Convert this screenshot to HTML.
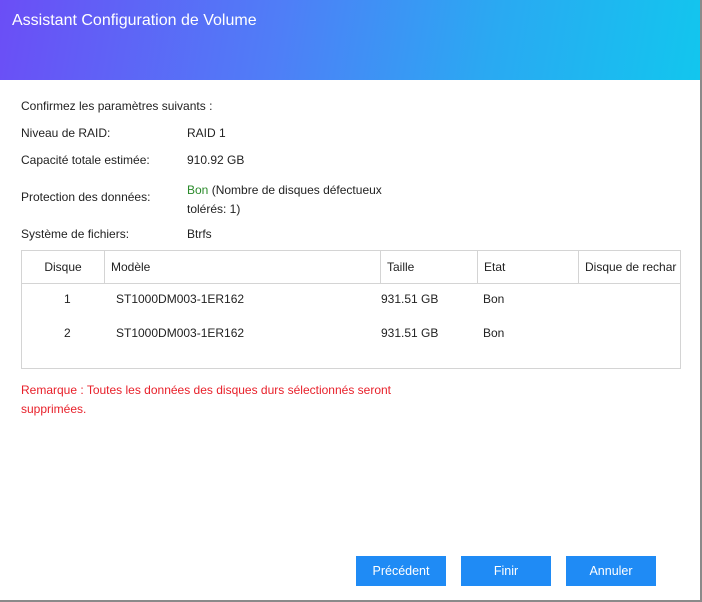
<!DOCTYPE html>
<html><head><meta charset="utf-8"><style>
body{margin:0;width:702px;height:602px;background:#fff;font-family:"Liberation Sans",sans-serif;font-size:12px;color:#222;position:relative;overflow:hidden}
.win{position:absolute;left:0;top:0;width:700px;height:600px;border-right:2px solid #8a8a8a;border-bottom:2px solid #8a8a8a;background:#fff}
.hdr{position:absolute;left:0;top:0;width:700px;height:80px;background:linear-gradient(100deg,#6b4ef6 0%,#4f7ef7 40%,#2aa9f2 70%,#12c6ee 100%)}
.hdr span{position:absolute;left:12px;top:12px;color:#fff;font-size:16px}
.t{position:absolute;white-space:nowrap}
table{position:absolute;left:21px;top:250px;width:660px;height:119px;border:1px solid #d4d4d4;border-collapse:collapse;table-layout:fixed}
th{font-weight:normal;height:30px;border-bottom:1px solid #d4d4d4;border-left:1px solid #d4d4d4;text-align:left;padding-left:6px;white-space:nowrap;overflow:hidden}
.btn{position:absolute;top:556px;width:90px;height:30px;background:#1f8bf5;color:#fff;text-align:center;line-height:30px;font-size:12.5px}
</style></head><body><div class="win">
<div class="hdr"><span>Assistant Configuration de Volume</span></div>
<div class="t" style="left:21px;top:99px">Confirmez les paramètres suivants :</div>
<div class="t" style="left:21px;top:126px">Niveau de RAID:</div><div class="t" style="left:187px;top:126px">RAID 1</div>
<div class="t" style="left:21px;top:153px">Capacité totale estimée:</div><div class="t" style="left:187px;top:153px">910.92 GB</div>
<div class="t" style="left:21px;top:190px">Protection des données:</div>
<div class="t" style="left:187px;top:181px;line-height:19px"><span style="color:#2a8a2a">Bon</span> (Nombre de disques défectueux<br>tolérés: 1)</div>
<div class="t" style="left:21px;top:227px">Système de fichiers:</div><div class="t" style="left:187px;top:227px">Btrfs</div>
<table><colgroup><col style="width:83px"><col style="width:276px"><col style="width:97px"><col style="width:101px"><col></colgroup>
<tr><th style="border-left:none;text-align:center;padding:0">Disque</th><th>Modèle</th><th>Taille</th><th>Etat</th><th>Disque de rechar</th></tr>
<tr><td></td><td></td><td></td><td></td><td></td></tr></table>
<div class="t" style="left:64px;top:292px">1</div><div class="t" style="left:116px;top:292px">ST1000DM003-1ER162</div><div class="t" style="left:381px;top:292px">931.51 GB</div><div class="t" style="left:483px;top:292px">Bon</div>
<div class="t" style="left:64px;top:326px">2</div><div class="t" style="left:116px;top:326px">ST1000DM003-1ER162</div><div class="t" style="left:381px;top:326px">931.51 GB</div><div class="t" style="left:483px;top:326px">Bon</div>
<div class="t" style="left:21px;top:381px;color:#e8202a;line-height:19px">Remarque : Toutes les données des disques durs sélectionnés seront<br>supprimées.</div>
<div class="btn" style="left:356px">Précédent</div><div class="btn" style="left:461px">Finir</div><div class="btn" style="left:566px">Annuler</div>
</div></body></html>
